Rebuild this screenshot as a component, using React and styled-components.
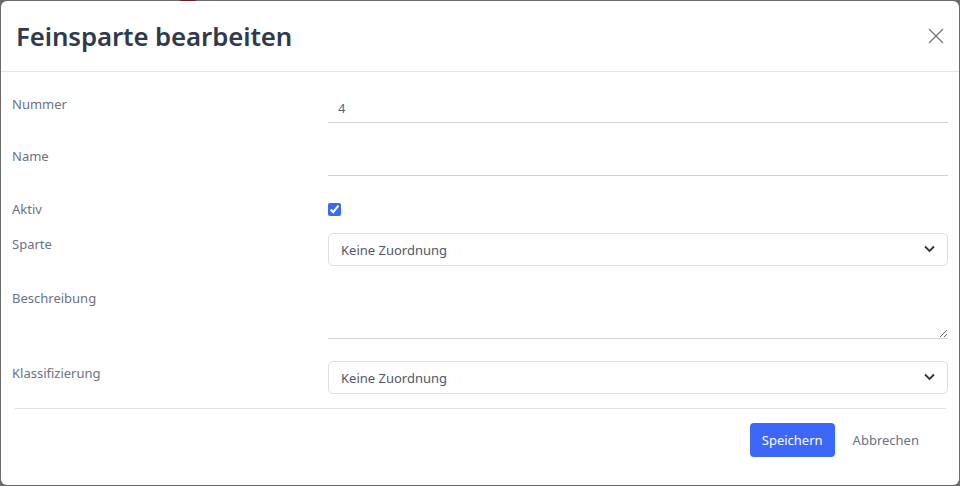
import React from 'react';
import styled, { createGlobalStyle } from 'styled-components';

const GlobalStyle = createGlobalStyle`
    html, body {
        margin: 0;
        padding: 0;
        background: #6b6b6b;
        font-family: "Noto Sans", "Open Sans", sans-serif;
    }
    * {
        box-sizing: border-box;
    }
`;

const Backdrop = styled.div`
    position: relative;
    width: 960px;
    height: 486px;
    padding: 1px;
    overflow: hidden;
`;

// a sliver of the page behind the overlay peeks out at the top edge
const BehindSpot = styled.div`
    position: absolute;
    top: -6px;
    left: 178px;
    width: 20px;
    height: 8px;
    border-radius: 50%;
    background: #6e1d22;
`;

const Modal = styled.div`
    position: relative;
    height: 484px;
    background: #fff;
    border-radius: 6px;
    display: flex;
    flex-direction: column;
`;

const Header = styled.div`
    height: 71px;
    display: flex;
    align-items: center;
    justify-content: space-between;
    padding: 0 14px 0 15px;
    border-bottom: 1px solid #e4e4e4;
`;

const Title = styled.h1`
    margin: 0;
    font-size: 25.8px;
    font-weight: 600;
    color: #2f3a4c;
    letter-spacing: -0.1px;
`;

const CloseButton = styled.button`
    border: 0;
    background: none;
    padding: 0;
    width: 18px;
    height: 18px;
    display: flex;
    align-items: center;
    justify-content: center;
    cursor: pointer;
`;

const Body = styled.form`
    padding: 21px 11px 0 11px;
`;

const FieldRow = styled.div`
    display: grid;
    grid-template-columns: 316px 1fr;
    align-items: start;
    margin-top: ${p => p.$mt || 0}px;
`;

const Label = styled.label`
    font-size: 13px;
    line-height: 20px;
    color: #6a7282;
    padding-top: ${p => p.$pt || 0}px;
`;

const LineInput = styled.input`
    width: 100%;
    height: 30px;
    border: 0;
    border-bottom: 1px solid #cfd1d4;
    padding: 0 10px;
    font: inherit;
    font-size: 13px;
    color: #5b6474;
    outline: none;
    background: transparent;
`;

const LineArea = styled.textarea`
    display: block;
    width: 100%;
    height: 51px;
    border: 0;
    border-bottom: 1px solid #cfd1d4;
    padding: 6px 10px;
    font: inherit;
    font-size: 13px;
    outline: none;
    resize: vertical;
`;

const CheckWrap = styled.div`
    height: 20px;
    display: flex;
    align-items: center;
    padding-top: 1px;
`;

const Check = styled.input`
    margin: 0;
    width: 13px;
    height: 13px;
    accent-color: #3b68f6;
`;

const SelectWrap = styled.div`
    position: relative;
    height: 33px;
`;

const Select = styled.select`
    appearance: none;
    width: 100%;
    height: 33px;
    border: 1px solid #dedfe1;
    border-radius: 5px;
    padding: 0 36px 0 12px;
    font: inherit;
    font-size: 13px;
    color: #4f5869;
    background: #fff;
    outline: none;
`;

const Chevron = styled.svg`
    position: absolute;
    right: 13px;
    top: 12px;
    pointer-events: none;
`;

const Divider = styled.hr`
    margin: 14px 2px 0 3px;
    border: 0;
    border-top: 1px solid #e2e3e5;
`;

const Footer = styled.div`
    display: flex;
    justify-content: flex-end;
    align-items: center;
    gap: 6px;
    padding: 14px 17px 0 0;
`;

const Button = styled.button`
    height: 34px;
    padding: 0 12px;
    border: 0;
    border-radius: 4px;
    font: inherit;
    font-size: 13px;
    cursor: pointer;
    background: ${p => (p.$primary ? '#3d67f6' : 'transparent')};
    color: ${p => (p.$primary ? '#fff' : '#6a7282')};
    min-width: ${p => (p.$primary ? '84px' : '0')};
`;

const SelectField = ({ value }) => (
    <SelectWrap>
        <Select defaultValue={value}>
            <option value={value}>{value}</option>
        </Select>
        <Chevron width="11" height="8" viewBox="0 0 11 8">
            <path d="M1 1.5 L5.5 6 L10 1.5" fill="none" stroke="#333" strokeWidth="1.8" />
        </Chevron>
    </SelectWrap>
);

export default function App() {
    return (
        <Backdrop>
            <GlobalStyle />
            <BehindSpot />
            <Modal>
                <Header>
                    <Title>Feinsparte bearbeiten</Title>
                    <CloseButton aria-label="Schließen">
                        <svg width="16" height="16" viewBox="0 0 16 16">
                            <path d="M1 1 L15 15 M15 1 L1 15" stroke="#777" strokeWidth="1.4" />
                        </svg>
                    </CloseButton>
                </Header>
                <Body onSubmit={e => e.preventDefault()}>
                    <FieldRow>
                        <Label $pt={1}>Nummer</Label>
                        <LineInput defaultValue="4" />
                    </FieldRow>
                    <FieldRow $mt={23}>
                        <Label>Name</Label>
                        <LineInput />
                    </FieldRow>
                    <FieldRow $mt={23}>
                        <Label>Aktiv</Label>
                        <CheckWrap>
                            <Check type="checkbox" defaultChecked />
                        </CheckWrap>
                    </FieldRow>
                    <FieldRow $mt={14}>
                        <Label $pt={1}>Sparte</Label>
                        <SelectField value="Keine Zuordnung" />
                    </FieldRow>
                    <FieldRow $mt={22}>
                        <Label>Beschreibung</Label>
                        <LineArea />
                    </FieldRow>
                    <FieldRow $mt={22}>
                        <Label $pt={2}>Klassifizierung</Label>
                        <SelectField value="Keine Zuordnung" />
                    </FieldRow>
                    <Divider />
                    <Footer>
                        <Button $primary type="submit">Speichern</Button>
                        <Button type="button">Abbrechen</Button>
                    </Footer>
                </Body>
            </Modal>
        </Backdrop>
    );
}
